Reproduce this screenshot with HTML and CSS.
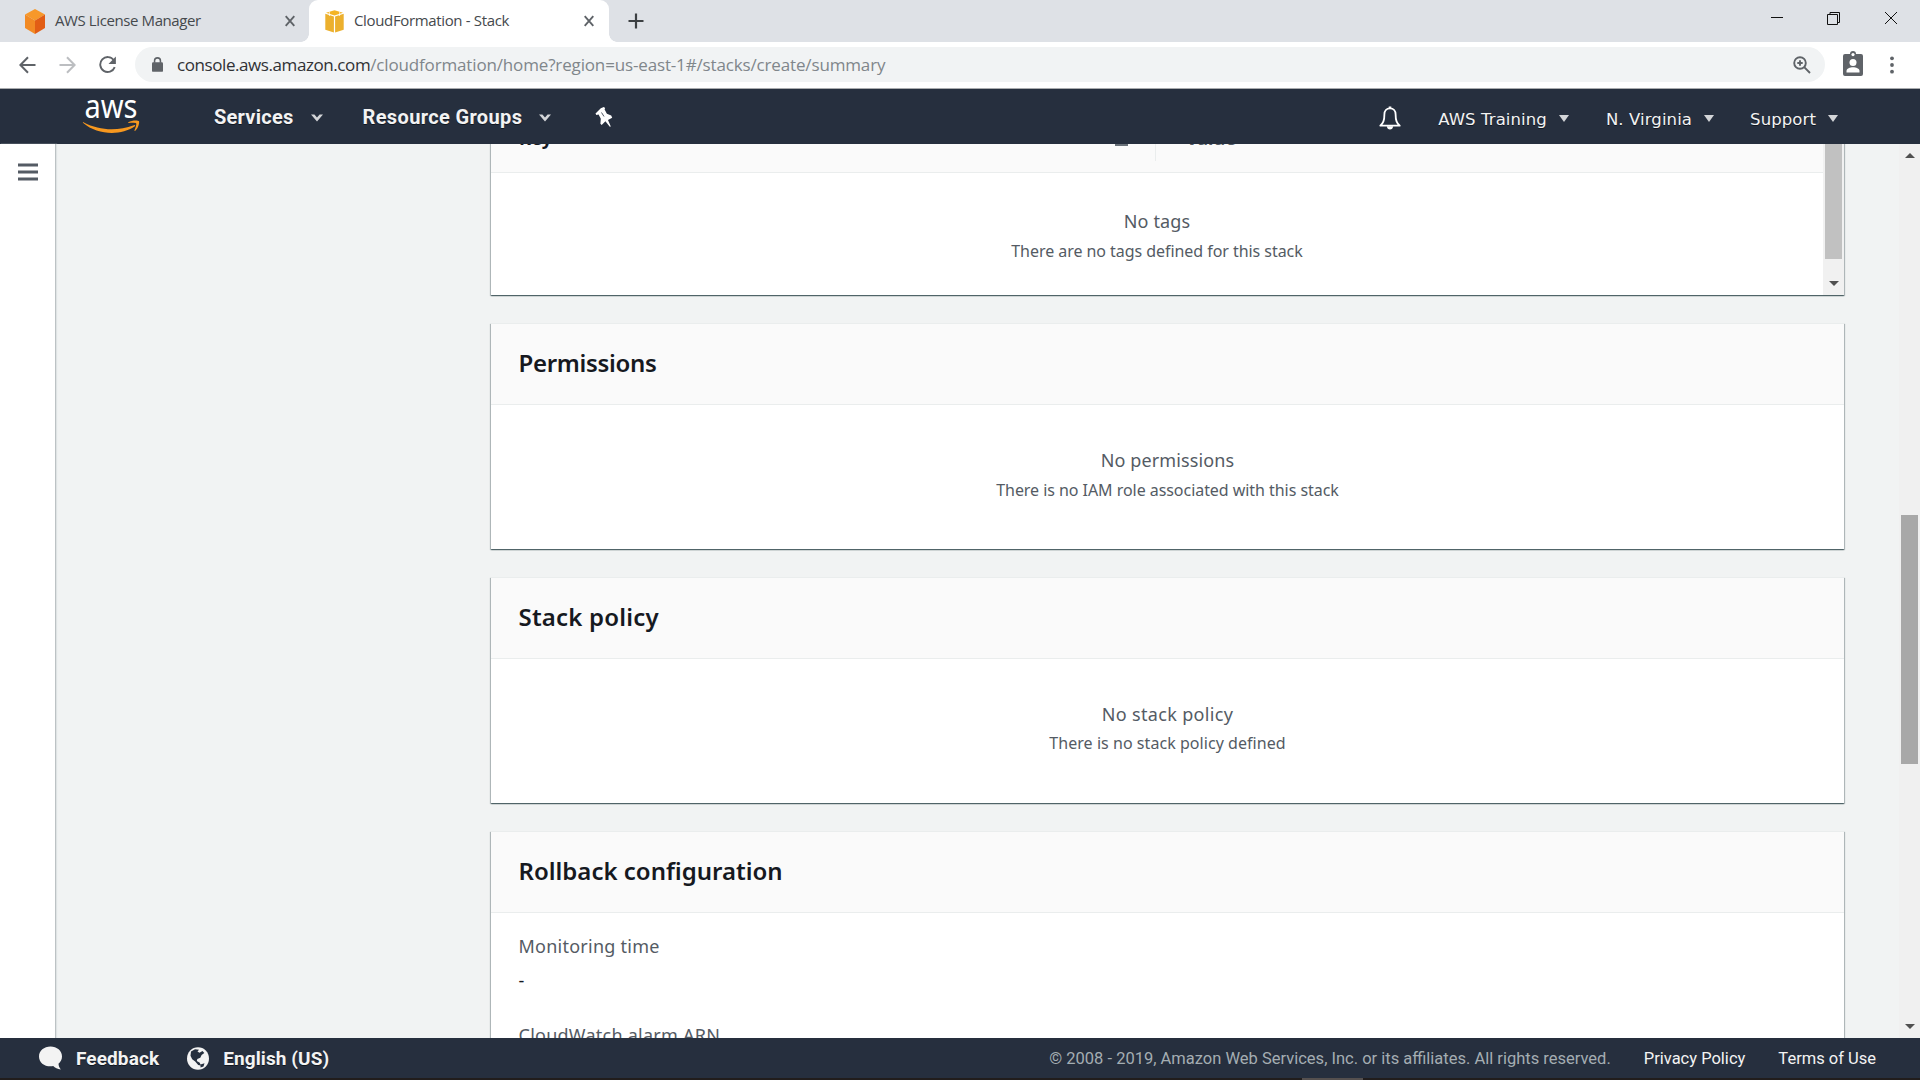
FILE: index.html
```
<!DOCTYPE html>
<html lang="en">
<head>
<meta charset="utf-8">
<title>CloudFormation - Stack</title>
<link rel="stylesheet" href="styles.css">
</head>
<body>
<div class="window">
  <div class="tabstrip">
    <div class="tab">
      <svg class="favicon" width="20" height="25" viewBox="0 0 20 25"><path fill="#f7982a" d="M10 0 20 5.500 10 11.500 0 5.500z"/><path fill="#f28a24" d="M0 5.500 10 11.500V25L0 19z"/><path fill="#e25d15" d="M20 5.500 10 11.500V25l10-6z"/></svg>
      <span class="tab-title">AWS License Manager</span>
      <svg class="close" width="10" height="12" viewBox="0 0 10 12"><path d="M.7 1.200 9.300 10.800M9.300 1.200.7 10.800"/></svg>
    </div>
    <div class="tab active">
      <svg class="favicon" width="19" height="23" viewBox="0 0 19 23"><path fill="#f4b425" d="M9.500.2 18 2.800 9.500 5.400 1 2.800z"/><path fill="#ecb02d" d="M.3 3.700 8.900 6.400V22.600L.3 19.800zM18.700 3.700 10.100 6.400V22.600l8.600-2.800z"/><path stroke="#fff" stroke-width=".7" fill="none" d="M4.300 1.500 4.500 6M14.700 1.500 14.500 6"/></svg>
      <span class="tab-title stack">CloudFormation - Stack</span>
      <svg class="close" width="10" height="12" viewBox="0 0 10 12"><path d="M.7 1.200 9.300 10.800M9.300 1.200.7 10.800"/></svg>
    </div>
    <svg class="new-tab" width="16" height="16" viewBox="0 0 16 16"><path d="M8 .5v15M.5 8h15"/></svg>
    <div class="window-buttons">
      <svg width="14" height="14" viewBox="0 0 14 14"><path d="M1 6.500h12"/></svg>
      <svg width="14" height="14" viewBox="0 0 14 14"><path d="M.5 3.500h10v10h-10zM3 3.500v-2h9.500v10h-2"/></svg>
      <svg width="14" height="14" viewBox="0 0 14 14"><path d="M1 1l12 12M13 1 1 13"/></svg>
    </div>
  </div>

  <div class="toolbar">
    <svg class="nav-icon back" width="17" height="18" viewBox="0 0 17 18"><path d="M16.500 9H1.500M9 1.200 1.400 9 9 16.800"/></svg>
    <svg class="nav-icon forward" width="17" height="18" viewBox="0 0 17 18"><path d="M.5 9h15M8 1.200 15.600 9 8 16.800"/></svg>
    <svg class="nav-icon reload" width="18" height="20" viewBox="0 0 19 20"><path d="M15.700 5A7.900 7.900 0 1 0 16.600 12.300"/><path class="solid" d="M17.800 1v8H10z"/></svg>
    <div class="omnibox">
      <svg class="lock" width="11" height="15" viewBox="0 0 12 16"><rect y="5.600" width="12" height="10.400" rx="1.300" fill="#5f6368"/><path d="M2.800 6V4a3.200 3.200 0 0 1 6.400 0v2" fill="none" stroke="#5f6368" stroke-width="1.700"/></svg>
      <span class="host">console.aws.amazon.com</span><span class="path">/cloudformation/home?region=us-east-1#/stacks/create/summary</span>
      <svg class="zoom-icon" width="18" height="18" viewBox="0 0 18 18"><circle cx="7" cy="7" r="5.800"/><path d="M11.200 11.200 17 17M7 4.300v5.400M4.300 7h5.400"/></svg>
    </div>
    <svg class="badge-icon" width="20" height="25" viewBox="0 0 20 25"><path fill="#5f6368" d="M2 3h5a3 3 0 0 1 6 0h5a2 2 0 0 1 2 2v18a2 2 0 0 1-2 2H2a2 2 0 0 1-2-2V5a2 2 0 0 1 2-2z"/><circle cx="10" cy="3.600" r="1.600" fill="#fff"/><circle cx="10" cy="11.500" r="3.500" fill="#fff"/><path fill="#fff" d="M3.500 21.500v-1.500c0-2.400 3.500-3.700 6.500-3.700s6.500 1.300 6.500 3.700v1.500z"/></svg>
    <svg class="menu-icon" width="4" height="18" viewBox="0 0 4 18"><circle cx="2" cy="2.300" r="1.900"/><circle cx="2" cy="9" r="1.900"/><circle cx="2" cy="15.700" r="1.900"/></svg>
  </div>

  <header class="console-nav">
    <svg class="logo" width="57" height="38" viewBox="0 0 57 38"><text x="1.500" y="19.500" textLength="53" lengthAdjust="spacingAndGlyphs">aws</text><path fill="#f7981f" d="M.4 24.200C17 33 35 33 50.800 27.200c1.400-.7 1.900.6.800 1.400C38 37.800 14.500 37.300.2 25c-.6-.6-.3-1.200.2-.8z"/><path fill="#f7981f" d="M45.300 24.300c3.400-2.300 9.800-2.200 10.600-1.200.8 1.200-.3 6.900-3.600 9.600-.5.400-1 .2-.8-.4.8-1.900 2.400-6.100 1.600-7-.8-1-5.100-.6-7.300-.3-.6 0-.8-.4-.5-.7z"/></svg>
    <span class="nav-main">Services</span>
    <svg class="chev" width="12" height="8" viewBox="0 0 12 8"><path d="M0 .5h3.400L6 3.600 8.600.5H12L6 7.600z"/></svg>
    <span class="nav-main groups">Resource Groups</span>
    <svg class="chev" width="12" height="8" viewBox="0 0 12 8"><path d="M0 .5h3.400L6 3.600 8.600.5H12L6 7.600z"/></svg>
    <svg class="pin" width="18" height="20" viewBox="0 0 18 20"><path fill="#fff" d="M5.800 1.300 8.800 0l1.300 1-.5 1.500 2.300 4.200 4.300 1.800 1 2.200-4.200 2.300 2.800 6.500-1 .2-4.400-5.400-3.700 3.700-1.300-1.300.4-5L3.600 7.600l-2.300.5L.5 6.500z"/><path stroke="#252f3e" stroke-width=".8" d="M6.500 5.500 9 9.500"/></svg>
    <svg class="bell" width="22" height="24" viewBox="0 0 22 24"><path fill="none" stroke="#fff" stroke-width="1.800" stroke-linejoin="round" d="M11 2.300c-3.600 0-5.600 2.500-5.600 6 0 6.500-1.200 8.600-4.100 11.400h19.400c-2.900-2.800-4.100-4.900-4.100-11.400 0-3.500-2-6-5.600-6z"/><path fill="#fff" d="M7.800 20.300h6.400c-.2 2-1.500 3.300-3.200 3.300s-3-1.300-3.200-3.300zM9.700.4h2.600v2H9.700z"/></svg>
    <span class="nav-side">AWS Training</span><i class="caret"></i>
    <span class="nav-side region">N. Virginia</span><i class="caret"></i>
    <span class="nav-side support">Support</span><i class="caret"></i>
  </header>

  <div class="page">
    <aside class="rail"><svg width="20" height="18" viewBox="0 0 20 18"><path stroke="#545b64" stroke-width="2.800" d="M0 2h20M0 9h20M0 16h20"/></svg></aside>
    <main class="content">
      <section class="card tags">
        <div class="tags-table">
          <div class="tags-head">
            <span class="col-key">Key</span><svg class="sort" width="13" height="8" viewBox="0 0 13 8"><path d="M0 7h13" stroke="#687078" stroke-width="2"/></svg>
            <span class="col-value">Value</span>
          </div>
          <div class="empty"><b>No tags</b><span>There are no tags defined for this stack</span></div>
        </div>
        <div class="inner-scroll"><div class="thumb"></div><i class="arrow down"></i></div>
      </section>
      <section class="card">
        <h2 class="tight">Permissions</h2>
        <div class="empty"><b>No permissions</b><span>There is no IAM role associated with this stack</span></div>
      </section>
      <section class="card">
        <h2 class="wide">Stack policy</h2>
        <div class="empty policy"><b>No stack policy</b><span>There is no stack policy defined</span></div>
      </section>
      <section class="card">
        <h2>Rollback configuration</h2>
        <dl class="details"><dt>Monitoring time</dt><dd>-</dd><dt>CloudWatch alarm ARN</dt></dl>
      </section>
    </main>
    <div class="page-scroll"><i class="arrow up"></i><div class="thumb"></div><i class="arrow down"></i></div>
  </div>

  <footer class="console-footer">
    <svg class="bubble" width="23" height="24" viewBox="0 0 23 24"><path fill="#f3f3f3" d="M11.500.5C17.900.5 23 4.800 23 10.400c0 3-1.400 5.500-3.500 7.300.1 2.300.8 3.900 2.300 5.700-3.400-.3-5.800-1.400-7.600-3.300C6.400 21.400 0 17 0 10.400 0 4.800 5.100.5 11.500.5z"/></svg>
    <span class="foot-main">Feedback</span>
    <svg class="globe" width="22" height="23" viewBox="0 0 22 23"><ellipse cx="11" cy="11.500" rx="11" ry="11.300" fill="#f3f3f3"/><path fill="#252f3e" d="M4 4.500 8 2.300l4 .5-1.500 1.800 2 1.200 3-1.700 1.800 2-2.700 1.800-1.300 2.800-3 1.200-.5 2.200 3 1.700 1 2.600-2.600-.5-3-3.400-3-2.300-1.700-3.500zM13.500 17.500l4-1.200-1 3.200-3 1z"/></svg>
    <span class="foot-main lang">English (US)</span>
    <span class="copyright">© 2008 - 2019, Amazon Web Services, Inc. or its affiliates. All rights reserved.</span>
    <span class="foot-link">Privacy Policy</span>
    <span class="foot-link terms">Terms of Use</span>
  </footer>
  <div class="taskbar-edge"><div></div></div>
</div>
</body>
</html>
```
FILE: styles.css
```
* { box-sizing: border-box; }
body { margin: 0; overflow: hidden; font-family: "Noto Sans", sans-serif; }
svg { display: block; flex: none; }
span { white-space: nowrap; flex: none; }
.window { width: 1920px; height: 1080px; display: flex; flex-direction: column; overflow: hidden; }

.tabstrip { height: 42px; flex: none; display: flex; background: #dee1e6; font-family: "Open Sans", sans-serif; }
.tab { width: 309px; display: flex; align-items: center; padding: 0 14px 0 25px; }
.tab.active { width: 300px; background: #fff; border-radius: 9px 9px 0 0; padding: 0 15px 0 16px; position: relative; }
.tab.active::before, .tab.active::after { content: ""; position: absolute; bottom: 0; width: 8px; height: 8px; }
.tab.active::before { left: -8px; background: radial-gradient(circle at 0 0, transparent 7.5px, #fff 8px); }
.tab.active::after { right: -8px; background: radial-gradient(circle at 100% 0, transparent 7.5px, #fff 8px); }
.tab-title { font-size: 15px; letter-spacing: -.4px; color: #45494d; margin: 0 auto 2px 10px; }
.tab-title.stack { letter-spacing: -.35px; }
.close { stroke: #5f6368; stroke-width: 1.9; }
.new-tab { stroke: #3c4043; stroke-width: 2.2; margin: 13px 0 0 19px; }
.window-buttons { margin: 11px 22px 0 auto; display: flex; gap: 43px; fill: none; stroke: #111; stroke-width: 1; }

.toolbar { height: 47px; flex: none; display: flex; align-items: center; background: #fff; border-bottom: 1px solid #a9abae; padding-bottom: 1px; }
.nav-icon { fill: none; stroke: #5f6368; stroke-width: 2; margin-left: 19px; }
.nav-icon.forward { stroke: #bcbec1; margin-left: 23px; }
.nav-icon.reload { margin-left: 23px; }
.solid { fill: #5f6368; stroke: none; }
.omnibox { width: 1690px; height: 35px; margin-left: 18px; border-radius: 18px; background: #f1f3f4; display: flex; align-items: center; padding: 0 14px 0 17px; font: 17px "Open Sans", sans-serif; }
.host { color: #303134; letter-spacing: -.42px; margin-left: 14px; }
.path { color: #80868b; letter-spacing: -.15px; }
.zoom-icon { fill: none; stroke: #5f6368; stroke-width: 1.9; margin-left: auto; }
.badge-icon { margin: -2px 0 0 18px; }
.menu-icon { fill: #5f6368; margin-left: 27px; }

.console-nav { height: 55px; flex: none; display: flex; align-items: center; background: #262f3e; }
.logo { margin-left: 83px; align-self: flex-start; margin-top: 9px; fill: #fff; font: 32px "Noto Sans", sans-serif; overflow: visible; }
.nav-main { font: bold 20px Roboto, sans-serif; letter-spacing: .25px; color: #f3f3f3; text-shadow: 0 1px 0 #10161f; margin-left: 74px; }
.nav-main.groups { margin-left: 40px; letter-spacing: .36px; }
.chev { fill: #d3d5d8; margin: 3px 0 0 17px; }
.pin { margin-left: 44px; }
.bell { margin: 2px 0 0 auto; }
.nav-side { font: 16.5px "DejaVu Sans", sans-serif; letter-spacing: .1px; color: #f3f3f3; text-shadow: 0 1px 0 #10161f; margin: 6px 0 0 37px; }
.nav-side.support { margin-left: 36px; }
.caret { border: 5px solid transparent; border-top: 7px solid #d3d5d8; border-bottom: 0; margin: 3px 0 0 12px; }
.caret:last-child { margin-right: 82px; }

.page { height: 894px; flex: none; display: flex; background: #f1f3f3; }
.rail { width: 56px; background: #fff; border-right: 1px solid #bcc2c4; box-shadow: 1px 0 1px #dfe3e4; padding: 19px 0 0 18px; }
.content { height: 894px; overflow: hidden; margin: 0 53px 0 433px; width: 1357px; padding: 0 2px; flex: none; }
.card { height: 226px; margin-bottom: 28px; background: #fff; border-top: 1px solid #eaeded; box-shadow: 0 1px 1px rgba(0,28,36,.45), 1px 1px 1px rgba(0,28,36,.22), -1px 1px 1px rgba(0,28,36,.22); }
.card.tags { height: 184px; margin-top: -33px; display: flex; }
.tags-table { width: 1332px; }
.tags-head { height: 61px; background: #fafafa; border-bottom: 1px solid #eaeded; display: flex; align-items: center; padding: 0 0 8px 28px; font-size: 18px; font-weight: 700; color: #16191f; }
.col-key { width: 596px; letter-spacing: .2px; }
.sort { margin-top: 7px; }
.col-value { margin-left: 27px; border-left: 1px solid #eaeded; padding: 12px 0 11px 30px; color: #545b64; line-height: 24px; margin-top: -1px; }
.inner-scroll { width: 21px; background: #f1f1f1; display: flex; flex-direction: column; align-items: center; }
.inner-scroll .thumb { width: 17px; height: 147px; background: #c1c1c1; }
.inner-scroll .arrow { margin-top: 22px; }
.arrow { border: 5px solid transparent; }
.arrow.down { border-top: 5px solid #505050; border-bottom: 0; }
.arrow.up { border-bottom: 5px solid #505050; border-top: 0; }
h2 { height: 81px; margin: 0; padding: 0 27.5px; background: #fafafa; border-bottom: 1px solid #eaeded; font-size: 24px; font-weight: 600; line-height: 78px; color: #16191f; }
h2.tight { letter-spacing: -.3px; }
h2.wide { letter-spacing: .2px; }
.empty { padding-top: 41px; display: flex; flex-direction: column; align-items: center; line-height: 29px; color: #545b64; font-size: 16px; }
.tags .empty { padding-top: 34px; }
.empty b { font-size: 18px; font-weight: 400; letter-spacing: .12px; }
.empty.policy b { letter-spacing: .35px; }
.empty span { letter-spacing: -.05px; margin-top: 1px; }
.empty.policy span { letter-spacing: .05px; margin-top: 0; }
.details { margin: 0; padding: 19px 27.5px; font-size: 18px; line-height: 29px; color: #545b64; }
.details dt { letter-spacing: .25px; }
.details dd { margin: 5px 0 26px; color: #16191f; }
.page-scroll { width: 21px; background: #f0f0f0; display: flex; flex-direction: column; align-items: center; padding: 9px 0; }
.page-scroll .thumb { width: 17px; height: 249px; margin: 357px 0 auto; background: #a8a8a8; }

.console-footer { height: 40px; flex: none; display: flex; align-items: center; background: #262f3e; font-family: Roboto, sans-serif; }
.bubble { margin-left: 39px; }
.foot-main { font-size: 19px; font-weight: 700; color: #f3f3f3; margin-left: 14px; letter-spacing: .1px; text-shadow: 0 1px 0 #10161f; }
.globe { margin-left: 28px; }
.copyright { font-size: 16.5px; color: #a4adb2; margin-left: auto; }
.foot-link { font-size: 16.5px; color: #f3f3f3; margin-left: 33px; }
.foot-link.terms { margin-right: 44px; }
.taskbar-edge { height: 2px; flex: none; background: #211d1c; }
.taskbar-edge div { width: 61px; height: 2px; margin-left: 1302px; background: #55504f; }
```
